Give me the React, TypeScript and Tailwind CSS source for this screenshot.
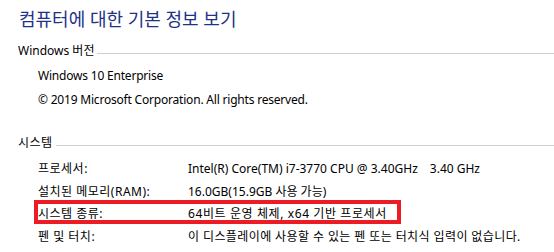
export default function App() {
  const rows = [
    { label: '프로세서:', value: 'Intel(R) Core(TM) i7-3770 CPU @ 3.40GHz', extra: '3.40 GHz', track: '' },
    { label: '설치된 메모리(RAM):', value: '16.0GB(15.9GB 사용 가능)', track: '' },
    { label: '시스템 종류:', value: '64비트 운영 체제, x64 기반 프로세서', marked: true, track: 'tracking-[0.6px]' },
    { label: '펜 및 터치:', value: '이 디스플레이에 사용할 수 있는 펜 또는 터치식 입력이 없습니다.', track: 'tracking-[0.4px]' },
  ];

  return (
    <div className="w-[554px] h-[252px] bg-white overflow-hidden text-[12px] text-black font-['Noto_Sans','Noto_Sans_CJK_KR',sans-serif]">
      {/* Title */}
      <div className="pl-[19px] pt-[7px] h-[31px] text-[18px] leading-[24px] text-[#1e3287]">
        컴퓨터에 대한 기본 정보 보기
      </div>

      {/* Windows edition */}
      <div className="mt-[10px] flex items-center h-[20px] pl-[18px]">
        <span className="leading-[20px]">Windows 버전</span>
        <div className="flex-1 h-px bg-[#cfcfcf] ml-[3px] mt-[4px]" />
      </div>
      <div className="mt-[3px] pl-[38px] tracking-[-0.2px]">
        <div className="h-[24px] leading-[24px]">Windows 10 Enterprise</div>
        <div className="h-[24px] leading-[24px]">© 2019 Microsoft Corporation. All rights reserved.</div>
      </div>

      {/* System */}
      <div className="mt-[21px] flex items-center h-[20px] pl-[18px]">
        <span className="leading-[20px] tracking-[0.5px]">시스템</span>
        <div className="flex-1 h-px bg-[#cfcfcf] ml-[3px] mt-[4px]" />
      </div>
      <div className="mt-[5px]">
        {rows.map((r) => (
          <div key={r.label} className="relative flex h-[22.5px] leading-[22px] pl-[38px] whitespace-nowrap">
            <span className="w-[150px] shrink-0 tracking-[0.5px]">{r.label}</span>
            <span className={r.track}>{r.value}</span>
            {r.extra && <span className="ml-[12px]">{r.extra}</span>}
            {r.marked && (
              <span className="absolute left-[34px] top-[-3px] w-[367px] h-[24px] border-4 border-[#ed1c24]" />
            )}
          </div>
        ))}
      </div>
    </div>
  );
}
